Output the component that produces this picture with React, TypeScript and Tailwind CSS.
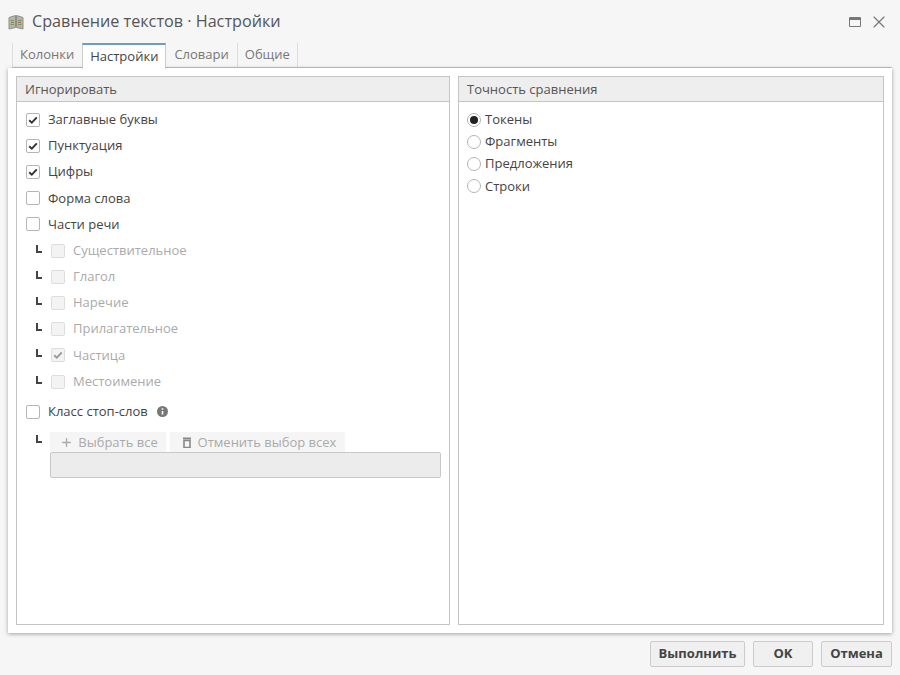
import { Plus, X } from 'lucide-react';

function CheckBox({ checked, disabled, label }: { checked?: boolean; disabled?: boolean; label: string }) {
  return (
    <div className={`flex items-center ${disabled ? 'text-[#aaaaaa]' : 'text-[#444444]'}`}>
      <span
        className={`flex items-center justify-center rounded-[2px] border w-[14px] h-[14px] ${
          disabled ? 'border-[#dddddd] bg-[#f3f3f3]' : 'border-[#b5b5b5] bg-white'
        }`}
      >
        {checked && (
          <svg width="10" height="10" viewBox="0 0 10 10" className={disabled ? 'text-[#999999]' : 'text-[#333333]'}>
            <path d="M1.2 5.2 3.8 7.6 8.8 2.4" fill="none" stroke="currentColor" strokeWidth="1.9" />
          </svg>
        )}
      </span>
      <span className="ml-[8px]">{label}</span>
    </div>
  );
}

function TreeMark() {
  return <span className="mr-[9px] w-[6px] h-[8px] border-l-2 border-b-2 border-[#444444] -translate-y-[2px]" />;
}

function SubItem({ checked, label }: { checked?: boolean; label: string }) {
  return (
    <div className="flex items-center h-[26.2px] pl-[10px]">
      <TreeMark />
      <CheckBox checked={checked} disabled label={label} />
    </div>
  );
}

function Radio({ checked, label }: { checked?: boolean; label: string }) {
  return (
    <div className="flex items-center h-[22.3px] text-[#444444]">
      <span className="flex items-center justify-center rounded-full border border-[#b5b5b5] bg-white w-[14px] h-[14px]">
        {checked && <span className="rounded-full bg-[#222222] w-[8px] h-[8px]" />}
      </span>
      <span className="ml-[4px]">{label}</span>
    </div>
  );
}

function FooterButton({ label, className }: { label: string; className: string }) {
  return (
    <button className={`h-[26px] rounded-[2px] border border-[#cccccc] bg-[#f0f0f0] text-[13px] font-bold text-[#444444] ${className}`}>
      {label}
    </button>
  );
}

export default function App() {
  return (
    <div
      className="w-[900px] h-[675px] flex flex-col bg-[#f6f6f6] text-[13px] overflow-hidden"
      style={{ fontFamily: '"Open Sans", sans-serif' }}
    >
      {/* title bar */}
      <div className="h-[43px] flex items-center pl-[8px] pr-[11px]">
        <svg width="16" height="16" viewBox="0 0 16 16" className="mr-[8px]">
          <path d="M1 3.5 7.5 1.5v12L1 15z" fill="#b4b8a2" stroke="#8f8f8f" />
          <path d="M15 3.5 8.5 1.5v12l6.5 1.5z" fill="#b8b29e" stroke="#8f8f8f" />
          <path d="M2.5 6.5h3.5M2.5 10.5h3.5M10 6.5h3.5M10 10.5h3.5" stroke="#6f9a62" strokeWidth="1.2" />
          <path d="M3 8.5h3M10 8.5h3" stroke="#b5685a" strokeWidth="1.2" />
        </svg>
        <span className="text-[16.2px] text-[#555555]">Сравнение текстов · Настройки</span>
        <span className="ml-auto w-[12px] h-[10px] border border-[#777777] border-t-[3px] rounded-[1px]" />
        <X className="ml-[8px] w-[20px] h-[20px] text-[#777777]" strokeWidth={1.4} />
      </div>

      {/* tabs */}
      <div className="h-[25px] flex items-end pl-[12px] pr-[8px] text-[#777777]">
        <div className="h-[25px] flex items-center pl-[7px] pr-[8px] border-b border-l border-[#dddddd] border-b-[#c4c4c4]">Колонки</div>
        <div className="relative z-10 h-[26px] -mb-px flex items-center px-[7px] bg-white text-[#444444] border-x border-[#cccccc] border-t-2 border-t-[#6e9dc4]">
          Настройки
        </div>
        <div className="h-[25px] flex items-center px-[8px] border-b border-[#c4c4c4]">Словари</div>
        <div className="h-[25px] flex items-center px-[7px] border-b border-x border-[#dddddd] border-b-[#c4c4c4]">Общие</div>
        <div className="flex-1 border-b border-[#c4c4c4]" />
      </div>

      {/* tab content */}
      <div className="mx-[8px] h-[565px] bg-white shadow-[0_1px_4px_rgba(0,0,0,0.35)] p-[8px] flex gap-[8px]">
        <div className="w-[434px] border border-[#c4c4c4] flex flex-col">
          <div className="h-[25px] px-[8px] pt-[1px] flex items-center bg-[#eeeeee] border-b border-[#c4c4c4] text-[#555555]">
            Игнорировать
          </div>
          <div className="pt-[4.6px] pl-[9px] pr-[8px]">
            <div className="h-[26.2px] flex items-center"><CheckBox checked label="Заглавные буквы" /></div>
            <div className="h-[26.2px] flex items-center"><CheckBox checked label="Пунктуация" /></div>
            <div className="h-[26.2px] flex items-center"><CheckBox checked label="Цифры" /></div>
            <div className="h-[26.2px] flex items-center"><CheckBox label="Форма слова" /></div>
            <div className="h-[26.2px] flex items-center"><CheckBox label="Части речи" /></div>
            <div>
              <SubItem label="Существительное" />
              <SubItem label="Глагол" />
              <SubItem label="Наречие" />
              <SubItem label="Прилагательное" />
              <SubItem checked label="Частица" />
              <SubItem label="Местоимение" />
            </div>
            <div className="mt-[4px] h-[26.2px] flex items-center">
              <CheckBox label="Класс стоп-слов" />
              <svg width="11" height="11" viewBox="0 0 11 11" className="ml-[9px]">
                <circle cx="5.5" cy="5.5" r="5.5" fill="#777777" />
                <path d="M5.5 2.2v1.5M5.5 5v3.6" stroke="#ffffff" strokeWidth="1.6" />
              </svg>
            </div>
            <div className="mt-[7px] flex">
              <span className="ml-[10px] mt-[3px] w-[6px] h-[8px] border-l-2 border-b-2 border-[#444444]" />
              <div className="ml-[8px] flex-1">
                <div className="flex gap-[4px] h-[20px] text-[#aaaaaa]">
                  <div className="w-[116px] pl-[2px] pt-[1px] flex items-center justify-center bg-[#f5f5f5]">
                    <Plus className="w-[13px] h-[13px] mr-[5px] text-[#aaaaaa]" strokeWidth={2.5} />
                    Выбрать все
                  </div>
                  <div className="w-[175px] pl-[3px] pt-[1px] flex items-center justify-center bg-[#f5f5f5]">
                    <svg width="10" height="11" viewBox="0 0 10 11" className="mr-[6px]">
                      <path d="M1 1.5h8" stroke="#888888" strokeWidth="2" />
                      <path d="M2 3.5h6v7H2z" fill="none" stroke="#888888" strokeWidth="1.6" />
                    </svg>
                    Отменить выбор всех
                  </div>
                </div>
                <div className="h-[26px] bg-[#ececec] border border-[#c8c8c8] rounded-[2px]" />
              </div>
            </div>
          </div>
        </div>

        <div className="flex-1 border border-[#c4c4c4] flex flex-col">
          <div className="h-[25px] px-[8px] pt-[1px] flex items-center bg-[#eeeeee] border-b border-[#c4c4c4] text-[#555555]">
            Точность сравнения
          </div>
          <div className="pt-[6.4px] pl-[8px]">
            <Radio checked label="Токены" />
            <Radio label="Фрагменты" />
            <Radio label="Предложения" />
            <Radio label="Строки" />
          </div>
        </div>
      </div>

      {/* footer */}
      <div className="mt-[8px] pr-[8px] flex justify-end gap-[8px]">
        <FooterButton label="Выполнить" className="w-[95px]" />
        <FooterButton label="OK" className="w-[60px]" />
        <FooterButton label="Отмена" className="w-[71px]" />
      </div>
    </div>
  );
}
